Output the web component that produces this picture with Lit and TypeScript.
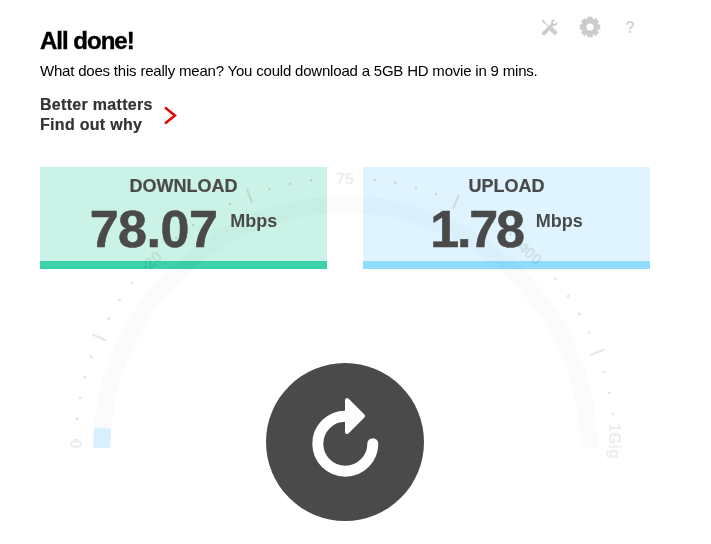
import {LitElement, html, css, svg} from 'lit';
import {customElement} from 'lit/decorators.js';

// gauge geometry, in page pixels
const CX = 345.3;
const CY = 448;

function polar(r: number, deg: number) {
    const a = (deg * Math.PI) / 180;
    return {x: CX - r * Math.cos(a), y: CY - r * Math.sin(a)};
}

function gearPath(): string {
    const cx = 11, cy = 11;
    const pts: string[] = [];
    for (let i = 0; i < 8; i++) {
        const mid = (i * Math.PI) / 4;
        const steps: [number, number][] = [[-0.42, 7.6], [-0.24, 10.6], [0.24, 10.6], [0.42, 7.6]];
        for (const [d, r] of steps) {
            pts.push(`${(cx + r * Math.cos(mid + d)).toFixed(2)} ${(cy + r * Math.sin(mid + d)).toFixed(2)}`);
        }
    }
    return `M${pts.join('L')}Z M14.6 11a3.6 3.6 0 1 0 -7.2 0a3.6 3.6 0 1 0 7.2 0Z`;
}

@customElement('app-root')
class AppRoot extends LitElement {

    private ticks() {
        const out = [];
        for (let k = 0; k < 40; k++) {
            if (k === 10 || k === 19 || k === 20 || k === 30) continue;
            const deg = 1.7 + 4.5 * k;
            const major = k % 5 === 0 && k > 0;
            const a = polar(major ? 262 : 268.6, deg);
            const b = polar(major ? 277 : 271, deg);
            out.push(svg`<line class=${major ? 'major' : 'minor'} x1=${a.x} y1=${a.y} x2=${b.x} y2=${b.y}></line>`);
        }
        return out;
    }

    private gauge() {
        const start = polar(243.5, 0);
        const end = polar(243.5, 180);
        const fill = polar(243.5, 4.7);
        return html`
            <svg class="gauge" width="711" height="544" viewBox="0 0 711 544">
                <path class="band" d="M${start.x} ${start.y}A243.5 243.5 0 0 1 ${end.x} ${end.y}"></path>
                <path class="band-fill" d="M${start.x} ${start.y}A243.5 243.5 0 0 1 ${fill.x} ${fill.y}"></path>
                ${this.ticks()}
                <text class="label" transform="translate(76 444) rotate(-90)">0</text>
                <text class="label" transform="translate(153 260) rotate(-43)">20</text>
                <text class="label" transform="translate(345 178.5) rotate(2)">75</text>
                <text class="label" transform="translate(530 253) rotate(43)">400</text>
                <text class="label" transform="translate(614 441) rotate(90)">1Gig</text>
            </svg>
        `;
    }

    render() {
        return html`
            <div class="page">
                ${this.gauge()}
                <header class="top">
                    <div class="intro">
                        <h1>All done!</h1>
                        <p>What does this really mean? You could download a 5GB HD movie in 9 mins.</p>
                        <a class="better">
                            <span>Better matters<br>Find out why</span>
                            <svg width="13" height="19" viewBox="0 0 13 19"><path fill="none" stroke="#e60000" stroke-width="2.4" d="M1 1.5l10 8-10 8"/></svg>
                        </a>
                    </div>
                    <div class="tools">
                        <svg width="17" height="17" viewBox="0 0 18 18">
                            <path fill="#cccccc" d="M0.8 0.6L3.4 1.6 4.8 4 10.6 9.8 12.2 8.6 17.6 14.4 14.6 17.4 9 11.8 10 10.2 4 5 1.8 3.6Z"/>
                            <path fill="#cccccc" d="M12.6 0.6C13.6 0.3 14.6 0.6 15.2 1L12.8 3.4 13.1 5 14.7 5.3 17.1 2.9C17.5 4 17.3 5.4 16.5 6.3 15.6 7.3 14.3 7.6 13.1 7.2L4.6 16.6C3.7 17.5 2.4 17.5 1.5 16.7 0.7 15.8 0.7 14.6 1.5 13.8L10.7 5C10.3 3.1 11 1.2 12.6 0.6Z"/>
                        </svg>
                        <svg width="22" height="22" viewBox="0 0 22 22"><path fill="#cccccc" fill-rule="evenodd" d=${gearPath()}></path></svg>
                        <span class="help">?</span>
                    </div>
                </header>
                <section class="cards">
                    <div class="card down">
                        <h2>DOWNLOAD</h2>
                        <div class="value"><b>78.07</b><span>Mbps</span></div>
                    </div>
                    <div class="card up">
                        <h2>UPLOAD</h2>
                        <div class="value"><b>1.78</b><span>Mbps</span></div>
                    </div>
                </section>
                <button class="again" aria-label="Test again">
                    <svg width="158" height="158" viewBox="0 0 158 158">
                        <path fill="none" stroke="#fff" stroke-width="11" stroke-linecap="round" d="M106.8 80.7A27.5 27.5 0 1 1 79.3 53.2"/>
                        <path fill="#fff" stroke="#fff" stroke-width="4" stroke-linejoin="round" d="M81 37L97 53 81 69Z"/>
                    </svg>
                </button>
            </div>
        `;
    }

    static styles = css`

        :host {
            display: block;
            font-family: "Liberation Sans", Arial, sans-serif;
        }

        .page {
            position: relative;
            isolation: isolate;
            box-sizing: border-box;
            width: 711px;
            height: 544px;
            padding: 16px 61px 0 40px;
            background: #fff;
            overflow: hidden;
        }

        .gauge {
            position: absolute;
            left: 0;
            top: 0;
            z-index: -1;

            & .band {
                fill: none;
                stroke: #fbfbfb;
                stroke-width: 17;
            }

            & .band-fill {
                fill: none;
                stroke: #d8f0fe;
                stroke-width: 17;
            }

            & .major {
                stroke: #e8e8e8;
                stroke-width: 2.2;
            }

            & .minor {
                stroke: #e0e0e0;
                stroke-width: 2;
            }

            & .label {
                fill: #ededed;
                font-size: 16px;
                font-weight: 700;
                text-anchor: middle;
                dominant-baseline: central;
            }
        }

        .top {
            display: flex;
            justify-content: space-between;
            align-items: flex-start;
            height: 151px;
        }

        .intro {
            padding-top: 10px;

            & h1 {
                margin: 0;
                font-size: 24px;
                line-height: 29px;
                font-weight: 700;
                letter-spacing: -1px;
                -webkit-text-stroke: 0.4px #000;
                color: #000;
            }

            & p {
                margin: 6px 0 0;
                font-size: 15px;
                line-height: 20px;
                letter-spacing: -0.2px;
                color: #000;
            }
        }

        .better {
            display: flex;
            align-items: center;
            gap: 11px;
            margin-top: 14px;
            font-size: 16px;
            line-height: 20px;
            letter-spacing: 0.3px;
            font-weight: 700;
            -webkit-text-stroke: 0.2px #333;
            color: #333;
        }

        .tools {
            display: flex;
            align-items: center;
            gap: 21px;
            margin-right: 15px;
            height: 22px;

            & .help {
                font-size: 16px;
                font-weight: 700;
                color: #d5d5d5;
                margin: 2px 0 0 3px;
            }
        }

        .cards {
            display: flex;
            gap: 36px;
        }

        .card {
            flex: 0 0 287px;
            box-sizing: border-box;
            height: 102px;
            padding-top: 9px;
            mix-blend-mode: multiply;
            text-align: center;
            color: #4a4a4a;

            &.down {
                background: #caf2e6;
                border-bottom: 8px solid #3bd1a9;
            }

            &.up {
                background: #dff4fe;
                border-bottom: 8px solid #8fdcfd;

                & b {
                    letter-spacing: -2.2px;
                }
            }

            & h2 {
                margin: 0;
                font-size: 18px;
                line-height: 21px;
                font-weight: 700;
                -webkit-text-stroke: 0.2px #4a4a4a;
            }
        }

        .value {
            display: flex;
            justify-content: center;
            align-items: flex-start;
            gap: 13px;
            margin-top: 4px;

            & b {
                font-size: 52px;
                line-height: 56px;
                letter-spacing: -0.5px;
                -webkit-text-stroke: 0.6px #4a4a4a;
            }

            & span {
                margin-top: 10px;
                font-size: 18px;
                line-height: 20px;
                font-weight: 700;
            }
        }

        .again {
            display: block;
            width: 158px;
            height: 158px;
            margin: 94px 0 0 226px;
            padding: 0;
            border: 0;
            border-radius: 50%;
            background: #4a4a4a;

            & svg {
                display: block;
            }
        }
    `;
}
